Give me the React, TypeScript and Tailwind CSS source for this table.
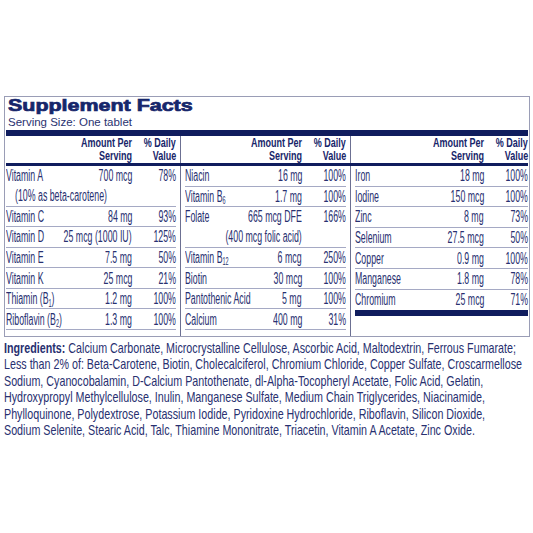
const L = "inline-block whitespace-nowrap origin-left scale-x-[0.55]";
const R = "inline-block whitespace-nowrap origin-right scale-x-[0.55]";
const HR = "inline-block whitespace-nowrap origin-right scale-x-[0.75]";

type RowProps = {
  name: React.ReactNode;
  amt: string;
  dv: string;
  tall?: boolean;
  last?: boolean;
  extra?: React.ReactNode;
};

function Row({ name, amt, dv, tall, last, extra }: RowProps) {
  return (
    <div
      className={`flex flex-col ${tall ? "h-[40.5px]" : "h-[20.6px]"} ${
        last ? "" : "border-b border-[#a5a9c4]"
      }`}
    >
      <div className="flex h-[20.5px] shrink-0 items-center">
        <div className="min-w-0 flex-1">
          <span className={L}>{name}</span>
        </div>
        <div className="text-right">
          <span className={R}>{amt}</span>
        </div>
        <div className="w-[44px] shrink-0 text-right">
          <span className={R}>{dv}</span>
        </div>
      </div>
      {extra}
    </div>
  );
}

function Head() {
  return (
    <div className="flex h-[27px] justify-end pt-[1px] text-[12px] font-bold leading-[12.5px] text-[#17256a]">
      <div className="text-right">
        <div><span className={HR}>Amount Per</span></div>
        <div><span className={HR}>Serving</span></div>
      </div>
      <div className="w-[44px] shrink-0 text-right">
        <div><span className={HR}>% Daily</span></div>
        <div><span className={HR}>Value</span></div>
      </div>
    </div>
  );
}

const sub = "text-[10px]";

const ingredients = [
  "Calcium Carbonate, Microcrystalline Cellulose, Ascorbic Acid, Maltodextrin, Ferrous Fumarate;",
  "Less than 2% of: Beta-Carotene, Biotin, Cholecalciferol, Chromium Chloride, Copper Sulfate, Croscarmellose",
  "Sodium, Cyanocobalamin, D-Calcium Pantothenate, dl-Alpha-Tocopheryl Acetate, Folic Acid, Gelatin,",
  "Hydroxypropyl Methylcellulose, Inulin, Manganese Sulfate, Medium Chain Triglycerides, Niacinamide,",
  "Phylloquinone, Polydextrose, Potassium Iodide, Pyridoxine Hydrochloride, Riboflavin, Silicon Dioxide,",
  "Sodium Selenite, Stearic Acid, Talc, Thiamine Mononitrate, Triacetin, Vitamin A Acetate, Zinc Oxide.",
];

const cols = "grid grid-cols-[176px_170px_minmax(0,1fr)]";

export default function App() {
  return (
    <div
      className="h-[533px] w-[533px] overflow-hidden bg-white pt-[96px]"
      style={{ fontFamily: '"Liberation Sans", Arial, sans-serif' }}
    >
      <div className="ml-[4px] w-[526px] border border-[#9a9db6]">
        {/* Title */}
        <div className="px-[3px]">
          <div className="h-[17px] pt-[1px] text-[16px] font-bold leading-[16px] text-[#16266b]">
            <span className="inline-block origin-left scale-x-[1.34] whitespace-nowrap [-webkit-text-stroke:0.7px_#16266b]">
              Supplement Facts
            </span>
          </div>
          <div className="mt-[2px] text-[11.5px] leading-[13px] text-[#2a3270]">
            Serving Size: One tablet
          </div>
        </div>
        <div className="mx-[1px] mt-[1px] h-[6px] bg-[#101d5e]" />

        {/* Column heads */}
        <div className={cols}>
          <div className="min-w-0 border-r border-[#6c7092] pl-[1px] pr-[4px]">
            <Head />
          </div>
          <div className="min-w-0 border-r border-[#6c7092] pl-[4px] pr-[4px]">
            <Head />
          </div>
          <div className="min-w-0 pl-[4px] pr-[1px]">
            <Head />
          </div>
        </div>
        <div className="mx-[1px] h-[3px] bg-[#101d5e]" />

        {/* Body */}
        <div className={`${cols} text-[16px] text-[#283070]`}>
          <div className="min-w-0 border-r border-[#6c7092] pb-[6px] pl-[1px] pr-[4px]">
            <Row
              name="Vitamin A"
              amt="700 mcg"
              dv="78%"
              tall
              extra={
                <div className="flex h-[19px] items-center pl-[9px]">
                  <span className={L}>(10% as beta-carotene)</span>
                </div>
              }
            />
            <Row name="Vitamin C" amt="84 mg" dv="93%" />
            <Row name="Vitamin D" amt="25 mcg (1000 IU)" dv="125%" />
            <Row name="Vitamin E" amt="7.5 mg" dv="50%" />
            <Row name="Vitamin K" amt="25 mcg" dv="21%" />
            <Row
              name={
                <>
                  Thiamin (B<sub className={sub}>1</sub>)
                </>
              }
              amt="1.2 mg"
              dv="100%"
            />
            <Row
              name={
                <>
                  Riboflavin (B<sub className={sub}>2</sub>)
                </>
              }
              amt="1.3 mg"
              dv="100%"
            />
          </div>

          <div className="min-w-0 border-r border-[#6c7092] pb-[6px] pl-[4px] pr-[4px]">
            <Row name="Niacin" amt="16 mg" dv="100%" />
            <Row
              name={
                <>
                  Vitamin B<sub className={sub}>6</sub>
                </>
              }
              amt="1.7 mg"
              dv="100%"
            />
            <Row
              name="Folate"
              amt="665 mcg DFE"
              dv="166%"
              tall
              extra={
                <div className="flex h-[19px] items-center justify-end pr-[44px]">
                  <span className={R}>(400 mcg folic acid)</span>
                </div>
              }
            />
            <Row
              name={
                <>
                  Vitamin B<sub className={sub}>12</sub>
                </>
              }
              amt="6 mcg"
              dv="250%"
            />
            <Row name="Biotin" amt="30 mcg" dv="100%" />
            <Row name="Pantothenic Acid" amt="5 mg" dv="100%" />
            <Row name="Calcium" amt="400 mg" dv="31%" />
          </div>

          <div className="min-w-0 pl-[4px] pr-[1px]">
            <Row name="Iron" amt="18 mg" dv="100%" />
            <Row name="Iodine" amt="150 mcg" dv="100%" />
            <Row name="Zinc" amt="8 mg" dv="73%" />
            <Row name="Selenium" amt="27.5 mcg" dv="50%" />
            <Row name="Copper" amt="0.9 mg" dv="100%" />
            <Row name="Manganese" amt="1.8 mg" dv="78%" />
            <Row name="Chromium" amt="25 mcg" dv="71%" last />
            <div className="h-[6px] bg-[#101d5e]" />
          </div>
        </div>
      </div>

      {/* Ingredients */}
      <div className="mt-[3px] pl-[4px] text-[15px] leading-[16.4px] text-[#283070]">
        <div className="origin-left scale-x-[0.715]">
          {ingredients.map((line, i) => (
            <div key={i} className="whitespace-nowrap">
              {i === 0 && <span className="font-bold">Ingredients: </span>}
              {line}
            </div>
          ))}
        </div>
      </div>
    </div>
  );
}
